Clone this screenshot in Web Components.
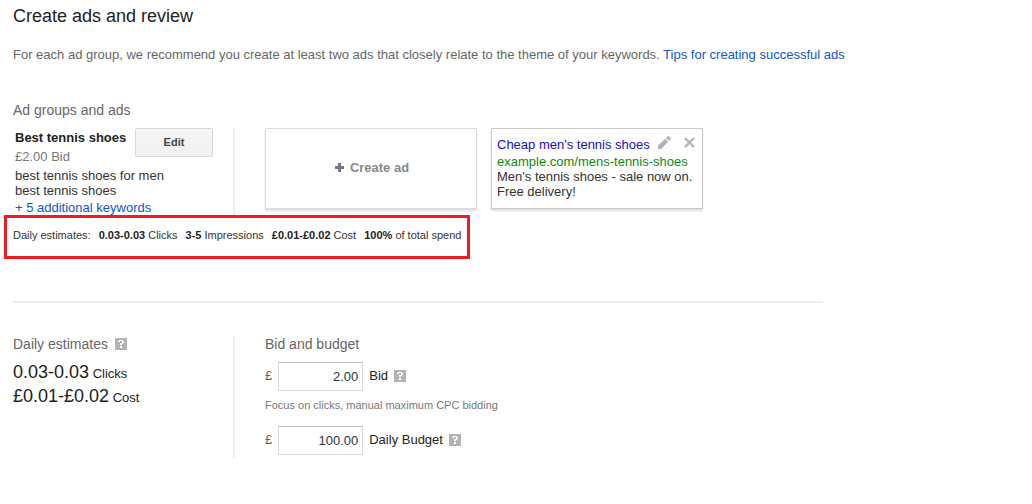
<!DOCTYPE html>
<html lang="en">
<head>
<meta charset="utf-8">
<meta name="viewport" content="width=device-width, initial-scale=1">
<title>Create ads and review</title>
<style>
  body { margin: 0; background: #fff; color: #333; font: 13px/16px "Liberation Sans", Arial, sans-serif; }
</style>
</head>
<body>
<review-page>
  <ad-group slot="group" name="Best tennis shoes" bid="£2.00 Bid">
    <span>best tennis shoes for men</span>
    <span>best tennis shoes</span>
    <a slot="more" href="#keywords">+ 5 additional keywords</a>
  </ad-group>
  <create-ad slot="ads">Create ad</create-ad>
  <ad-preview slot="ads">
    <span slot="headline">Cheap men's tennis shoes</span>
    <span slot="url">example.com/mens-tennis-shoes</span>
    Men's tennis shoes - sale now on. Free delivery!
  </ad-preview>
  <group-estimates slot="estimates"></group-estimates>
  <daily-estimates slot="totals"></daily-estimates>
  <bid-budget slot="budget"></bid-budget>
</review-page>

<script>
const define = (name, html, setup) => {
  const template = document.createElement('template');
  template.innerHTML = html;
  customElements.define(name, class extends HTMLElement {
    constructor() {
      super();
      this.attachShadow({ mode: 'open' }).append(template.content.cloneNode(true));
    }
    connectedCallback() { if (setup) setup(this, this.shadowRoot); }
  });
};

define('help-icon', `
  <style>
    :host { display: inline-flex; }
    button { display: block; width: 12px; height: 12px; padding: 0; border: 0; background: none; cursor: pointer; }
    svg { display: block; }
  </style>
  <button type="button" aria-label="Help">
    <svg width="12" height="12" viewBox="0 0 12 12" shape-rendering="crispEdges" aria-hidden="true">
      <path fill="#b3b3b3" d="M0 0h12v12H0z"/>
      <path fill="#fff" d="M4 2h4v1h1v2H8v1H7v1H5V5h2V3H5v1H3V3h1zM5 8h2v2H5z"/>
    </svg>
  </button>`);

define('ad-group', `
  <style>
    :host { display: flex; justify-content: space-between; align-items: flex-start; padding: 0 20px 0 2px; white-space: nowrap; }
    .info { flex: 1; min-width: 0; padding-top: 2px; }
    h3 { margin: 0; font-size: 13px; line-height: 16px; color: #222; }
    .bid { margin: 3px 0; color: #777; }
    .keywords { line-height: 15px; }
    .more { margin-top: 2px; }
    ::slotted(span) { display: block; }
    ::slotted(a) { color: #15c; text-decoration: none; }
    button { width: 78px; height: 29px; padding: 0 0 2px; border: 1px solid #d8d8d8; border-radius: 2px;
      background: linear-gradient(#f5f5f5, #f1f1f1); color: #444; font: bold 11px/16px "Liberation Sans", Arial, sans-serif; }
  </style>
  <div class="info">
    <h3></h3>
    <div class="bid"></div>
    <div class="keywords"><slot></slot></div>
    <div class="more"><slot name="more"></slot></div>
  </div>
  <button type="button">Edit</button>`,
  (host, root) => {
    root.querySelector('h3').textContent = host.getAttribute('name');
    root.querySelector('.bid').textContent = host.getAttribute('bid');
  });

define('create-ad', `
  <style>
    :host { display: block; }
    button { display: flex; align-items: center; justify-content: center; gap: 6px; width: 100%; height: 100%; padding: 0 0 2px 2px;
      border: 1px solid #ddd; background: #fff; box-shadow: 0 2px 2px #ddd; color: #888;
      font: bold 13px/16px "Liberation Sans", Arial, sans-serif; }
  </style>
  <button type="button">
    <svg width="9" height="9" viewBox="0 0 9 9" aria-hidden="true"><path fill="#777" d="M3 0h3v3h3v3H6v3H3V6H0V3h3z"/></svg>
    <span><slot></slot></span>
  </button>`);

define('ad-preview', `
  <style>
    :host { display: block; box-sizing: border-box; padding: 7px 5px; border: 1px solid #ccc; box-shadow: 0 2px 2px #ddd; background: #fff; line-height: 15px; }
    .top { display: flex; align-items: flex-start; line-height: 18px; white-space: nowrap; }
    .headline { flex: 1; color: #11c; }
    .url { color: #118811; }
    button { width: 13px; height: 13px; padding: 0; border: 0; background: none; }
    .close { margin: 0 1px 0 12px; }
    svg { display: block; }
  </style>
  <div class="top">
    <span class="headline"><slot name="headline"></slot></span>
    <button type="button" aria-label="Edit ad">
      <svg width="13" height="13" viewBox="0 0 13 13" aria-hidden="true"><path fill="#b3b3b3" d="M0 13V9.6L7.2 2.8l3 3L3.4 13zM8 2l1.4-1.5q.9-.8 1.8 0l1.2 1.2q.9.9 0 1.8L11 5z"/></svg>
    </button>
    <button type="button" class="close" aria-label="Remove ad">
      <svg width="13" height="13" viewBox="0 0 13 13" aria-hidden="true"><path fill="none" stroke="#b3b3b3" stroke-width="2.4" d="M2 2l9 9M11 2l-9 9"/></svg>
    </button>
  </div>
  <div class="url"><slot name="url"></slot></div>
  <slot></slot>`);

define('group-estimates', `
  <style>
    :host { display: flex; gap: 8px; width: max-content; padding: 9px 6px 13px 6px; border: 3px solid #ed1c24; font-size: 11px; white-space: nowrap; }
    b { color: #222; }
  </style>
  <span>Daily estimates:</span>
  <span><b>0.03-0.03</b> Clicks</span>
  <span><b>3-5</b> Impressions</span>
  <span><b>£0.01-£0.02</b> Cost</span>
  <span><b>100%</b> of total spend</span>`);

define('daily-estimates', `
  <style>
    :host { display: block; }
    h2 { display: flex; align-items: center; gap: 7px; margin: 0 0 8px; font: 14px/16px "Liberation Sans", Arial, sans-serif; color: #666; }
    p { margin: 0; font-size: 18px; line-height: 24px; color: #222; }
    .unit { font-size: 13px; line-height: 16px; }
  </style>
  <h2>Daily estimates <help-icon></help-icon></h2>
  <p>0.03-0.03<span class="unit"> Clicks</span></p>
  <p>£0.01-£0.02<span class="unit"> Cost</span></p>`);

define('bid-budget', `
  <style>
    :host { display: block; }
    h2 { margin: 0 0 10px; font: 14px/16px "Liberation Sans", Arial, sans-serif; color: #666; }
    .field { display: flex; align-items: center; gap: 6px; color: #666; }
    label { color: #222; }
    .field > :not(input) { margin-bottom: 2px; }
    input { box-sizing: border-box; width: 85px; height: 29px; padding: 0 4px; border: 1px solid #d9d9d9; border-top-color: #c0c0c0;
      text-align: right; color: #333; font: 13px/16px "Liberation Sans", Arial, sans-serif; }
    p { margin: 6px 0 13px; font-size: 11px; color: #777; }
  </style>
  <h2>Bid and budget</h2>
  <div class="field"><span>£</span><input id="bid" type="text" value="2.00"><label for="bid">Bid</label><help-icon></help-icon></div>
  <p>Focus on clicks, manual maximum CPC bidding</p>
  <div class="field"><span>£</span><input id="budget" type="text" value="100.00"><label for="budget">Daily Budget</label><help-icon></help-icon></div>`);

define('review-page', `
  <style>
    :host { display: block; padding: 4px 13px 32px; }
    h1 { margin: 0 0 19px; font: 18px/24px "Liberation Sans", Arial, sans-serif; color: #222; }
    p { margin: 0; color: #666; }
    a { color: #15c; text-decoration: none; }
    h2 { margin: 39px 0 10px; font: 14px/16px "Liberation Sans", Arial, sans-serif; color: #666; }
    main { max-width: 810px; }
    .row { display: grid; grid-template-columns: 220px 1fr; }
    .groups { min-height: 91px; }
    .right { border-left: 2px solid #eee; padding-left: 30px; }
    .ads { display: grid; grid-template-columns: repeat(auto-fill, 212px); grid-auto-rows: 81px; gap: 14px; }
    .estimates { position: relative; margin: -4px 0 42px -9px; }
    hr { height: 2px; margin: 0 0 33px; border: 0; background: #eee; }
    .totals { min-height: 122px; }
  </style>
  <h1>Create ads and review</h1>
  <p>For each ad group, we recommend you create at least two ads that closely relate to the theme of your keywords.
    <a href="#tips">Tips for creating successful ads</a></p>
  <main>
    <h2>Ad groups and ads</h2>
    <section class="row groups">
      <slot name="group"></slot>
      <div class="right ads"><slot name="ads"></slot></div>
    </section>
    <div class="estimates"><slot name="estimates"></slot></div>
    <hr>
    <section class="row totals">
      <slot name="totals"></slot>
      <div class="right"><slot name="budget"></slot></div>
    </section>
  </main>`);
</script>
</body>
</html>
